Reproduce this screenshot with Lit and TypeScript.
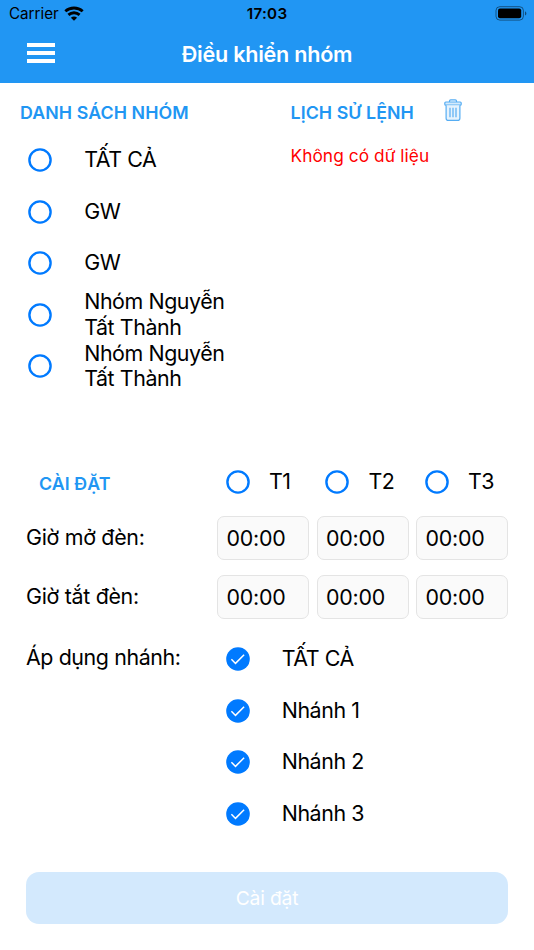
import { LitElement, html, css, svg } from "lit";
import { customElement, property } from "lit/decorators.js";

const GROUPS = ["TẤT CẢ", "GW", "GW", "Nhóm Nguyễn Tất Thành", "Nhóm Nguyễn Tất Thành"];
const TIMERS = ["T1", "T2", "T3"];
const BRANCHES = ["TẤT CẢ", "Nhánh 1", "Nhánh 2", "Nhánh 3"];

@customElement("check-circle")
class CheckCircle extends LitElement {
  @property({ type: Boolean }) checked = false;

  static styles = css`
    :host { display: block; flex: none; width: 24px; height: 24px; }
    svg { display: block; overflow: visible; }
  `;

  render() {
    return html`<svg width="24" height="24" viewBox="0 0 24 24" fill="none">
      ${this.checked
        ? svg`<circle cx="12" cy="12" r="11.8" fill="#007aff"/>
              <path d="M5.4 12.2 9.5 16.4 18.1 7.7" stroke="#fff" stroke-width="1.5"/>`
        : svg`<circle cx="12" cy="12" r="10.6" stroke="#007aff" stroke-width="2.4"/>`}
    </svg>`;
  }
}

@customElement("app-root")
class AppRoot extends LitElement {
  static styles = css`
    :host {
      display: flex;
      flex-direction: column;
      box-sizing: border-box;
      width: 534px;
      height: 950px;
      background: #fff;
      color: #000;
      font-family: Inter, "Noto Sans", sans-serif;
      font-size: 21.4px;
      line-height: 25.8px;
      letter-spacing: -0.42px;
      overflow: hidden;
    }
    * { box-sizing: border-box; }
    svg { display: block; }
    header { height: 83px; background: #2196f3; flex: none; }
    .status {
      display: grid;
      grid-template-columns: 1fr auto 1fr;
      align-items: center;
      height: 28px;
      padding: 0 7px 0 9px;
      font-size: 15.2px;
      letter-spacing: 0;
      line-height: 28px;
    }
    .carrier { display: flex; align-items: center; gap: 5px; }
    .carrier svg { margin-top: -2px; }
    .clock { font-weight: 600; letter-spacing: 0.3px; margin-left: -2px; }
    .battery { justify-self: end; margin-top: -1px; }
    .nav {
      display: grid;
      grid-template-columns: 1fr auto 1fr;
      align-items: center;
      height: 53px;
      padding: 0 27px;
      color: #fff;
    }
    .menu { display: flex; flex-direction: column; gap: 4px; width: 28px; margin-top: -4px; }
    .menu i { height: 4px; background: #fff; }
    .title { font-size: 21.6px; font-weight: 560; letter-spacing: -0.25px; }
    .top { display: flex; height: 373px; padding: 15px 20px 0; flex: none; }
    .groups { width: 270.5px; }
    h2 {
      margin: 0;
      color: #2196f3;
      font-size: 17.8px;
      font-weight: 560;
      line-height: 30px;
      letter-spacing: 0.08px;
      white-space: nowrap;
    }
    .list { margin-top: 6.3px; }
    .row { display: flex; align-items: center; height: 51.6px; }
    .groups .row { padding-left: 8px; gap: 32.2px; }
    .groups .row span { width: 150px; }
    .history-head { display: flex; gap: 29.6px; }
    .history-head svg { margin-top: 1px; }
    .empty { margin: 15px 0 0; color: #f00; font-size: 17.3px; letter-spacing: 0.06px; }
    .settings {
      display: grid;
      grid-template-columns: 183.5px repeat(3, 92px);
      column-gap: 7.5px;
      grid-template-rows: 59.9px 59.3px 58.1px 213.2px;
      padding-left: 26px;
      flex: none;
    }
    .settings h2 { padding: 12.5px 0 0 13px; }
    .timer { display: flex; align-items: center; gap: 19.3px; padding-left: 8.7px; height: 52px; }
    .label { padding-top: 9px; white-space: nowrap; letter-spacing: -0.3px; }
    .field {
      height: 44px;
      padding-left: 8.5px;
      border: 1px solid #e4e4e4;
      border-radius: 7px;
      background: #fafafa;
      line-height: 42.6px;
      letter-spacing: -0.25px;
    }
    .branches { grid-column: 2 / -1; }
    .branches .row { padding-left: 8.7px; gap: 32px; }
    .apply { padding-top: 11.8px; letter-spacing: -0.4px; }
    button {
      width: 482px;
      height: 51.6px;
      margin: 25.9px 26px 0;
      padding: 0;
      border: 0;
      border-radius: 13px;
      background: #d3e9fd;
      color: #fff;
      font: 19.3px/52px Inter, "Noto Sans", sans-serif;
      letter-spacing: -0.2px;
      flex: none;
    }
  `;

  render() {
    return html`
      <header>
        <div class="status">
          <span class="carrier"><span>Carrier</span>
            <svg width="20" height="15" viewBox="0 0 20 15" fill="none" stroke="#000" stroke-width="2.8">
              <path d="M1.3 5.3C6.2.9 13.8.9 18.7 5.3"/>
              <path d="M4.4 8.9C7.6 6 12.4 6 15.6 8.9"/>
              <path d="M10 14.8 6.9 11.8C8.7 10.2 11.3 10.2 13.1 11.8Z" fill="#000" stroke="none"/>
            </svg>
          </span>
          <span class="clock">17:03</span>
          <svg class="battery" width="32" height="15" viewBox="0 0 32 15">
            <rect x="1" y=".7" width="27.4" height="13.4" rx="3.8" fill="none" stroke="#000" stroke-opacity=".45"/>
            <rect x="3" y="2.6" width="23.2" height="9.6" rx="2"/>
            <path d="M30 5.2C31.9 6 31.9 8.8 30 9.6Z" fill-opacity=".5"/>
          </svg>
        </div>
        <div class="nav">
          <div class="menu"><i></i><i></i><i></i></div>
          <div class="title">Điều khiển nhóm</div>
        </div>
      </header>
      <div class="top">
        <section class="groups">
          <h2>DANH SÁCH NHÓM</h2>
          <div class="list">
            ${GROUPS.map((g) => html`<div class="row"><check-circle></check-circle><span>${g}</span></div>`)}
          </div>
        </section>
        <section>
          <div class="history-head">
            <h2>LỊCH SỬ LỆNH</h2>
            <svg width="18" height="23" viewBox="0 0 18 23" fill="none" stroke="#56adf3" stroke-width="1.2">
              <path d="M5.5 3V2Q5.5.8 6.7.8H11.3Q12.5.8 12.5 2V3"/>
              <rect x=".8" y="3" width="16.4" height="3.2" rx="1" fill="#d5eafb"/>
              <path d="M2.1 6.2V19.2Q2.1 21.4 4.3 21.4H13.7Q15.9 21.4 15.9 19.2V6.2" fill="#e6f3fd"/>
              <path d="M6 8.7V18.3M9 8.7V18.3M12 8.7V18.3"/>
            </svg>
          </div>
          <p class="empty">Không có dữ liệu</p>
        </section>
      </div>
      <section class="settings">
        <h2>CÀI ĐẶT</h2>
        ${TIMERS.map((t) => html`<div class="timer"><check-circle></check-circle><span>${t}</span></div>`)}
        ${["Giờ mở đèn:", "Giờ tắt đèn:"].map((l) => html`
          <div class="label">${l}</div>
          ${TIMERS.map(() => html`<div class="field">00:00</div>`)}`)}
        <div class="label apply">Áp dụng nhánh:</div>
        <div class="branches">
          ${BRANCHES.map((b) => html`<div class="row"><check-circle checked></check-circle><span>${b}</span></div>`)}
        </div>
      </section>
      <button disabled>Cài đặt</button>
    `;
  }
}
